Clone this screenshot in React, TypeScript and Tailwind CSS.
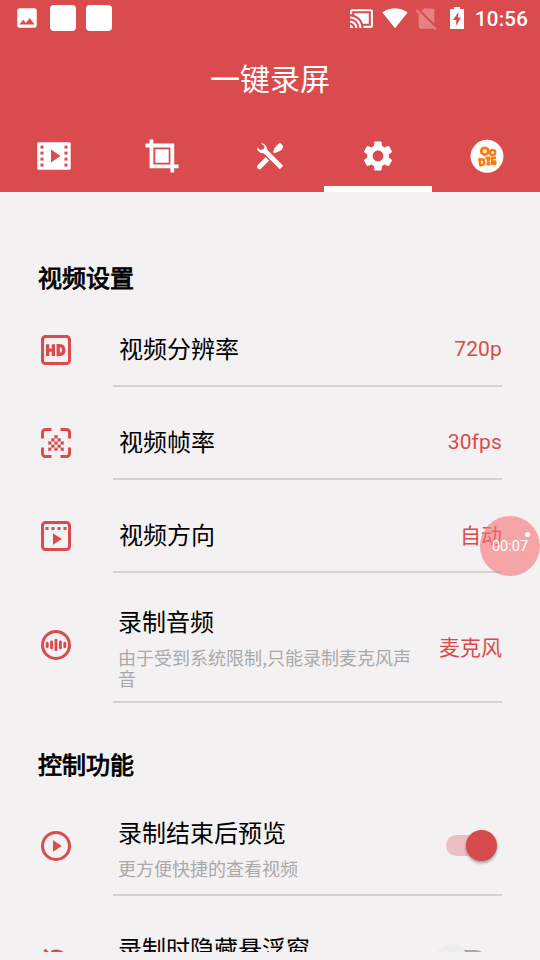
import type { ReactNode } from "react";
import { MdCastConnected, MdImage, MdSettings, MdSignalCellularNoSim, MdSignalWifi4Bar } from "react-icons/md";

const RED = "#da4b4d";

function StatusBar() {
  return (
    <div className="flex h-9 items-center pl-[14px] pr-3">
      <MdImage size={26} className="mr-[10px]" />
      <span className="mr-[10px] size-[26px] rounded-[4px] bg-white" />
      <span className="size-[26px] rounded-[4px] bg-white" />
      <MdCastConnected size={25} className="ml-auto mr-[8px] mt-px" />
      <MdSignalWifi4Bar size={26} className="mr-[5px]" />
      <MdSignalCellularNoSim size={27} className="mr-[10px] opacity-30" />
      <svg width="14" height="22" viewBox="0 0 14 22" className="mr-[11px] mb-px">
        <path d="M4 0h6v2h4v20H0V2h4z" fill="#fff" />
        <path d="M8.5 4.8 3 13h3.200v6L11 10.500H8z" fill={RED} />
      </svg>
      <span className="pt-[2px] text-[20.5px] font-medium leading-none tracking-[0.2px]">10:56</span>
    </div>
  );
}

function FilmIcon() {
  return (
    <svg width="34" height="28" viewBox="0 0 34 28">
      <rect x=".3" y=".3" width="33.400" height="27.400" rx="1.500" fill="#fff" />
      <path d="M14 7.500v13l9.500-6.500z" fill={RED} />
      {[3.6, 9.600, 15.600, 21.600].map((y) => (
        <g key={y} fill={RED}>
          <rect x="3.500" y={y} width="3" height="3" />
          <rect x="27.500" y={y} width="3" height="3" />
        </g>
      ))}
    </svg>
  );
}

function CropIcon() {
  return (
    <svg width="34" height="34" viewBox="0 0 34 34" fill="none" stroke="#fff">
      <path d="M6.500 .5v26.800H33.500M.5 6.500h26.800V33.500" strokeWidth="3.800" />
      <rect x="10.300" y="10.300" width="13.400" height="13.400" fill="#fff" stroke="none" />
    </svg>
  );
}

function ToolsIcon() {
  return (
    <svg width="28" height="28" viewBox="0 0 28 28">
      <path d="M24 .8 27.200 3.900 26.200 7.500 21.300 10.200 17.800 11.300 17.200 10.100 18.400 6.400 20.700 3.400z" fill="#fff" />
      <path d="M14 14.200 3.500 24.700" stroke="#fff" strokeWidth="4.800" strokeLinecap="round" />
      <path d="M8.500 8.500 24.500 24.500" stroke={RED} strokeWidth="7.500" />
      <path d="M8 8 25.500 25.500" stroke="#fff" strokeWidth="4.800" />
      <path d="M4.800 1.200a6 6 0 0 1 6 7.600L8.600 11A6 6 0 0 1 .9 5.200l3.400 2.900 3.300-.8.900-3.200z" fill="#fff" />
    </svg>
  );
}

function CameraLogo() {
  return (
    <svg width="34" height="34" viewBox="0 0 34 34" className="ml-px">
      <circle cx="17" cy="17.300" r="16.500" fill="#fff" />
      <g fill="none" stroke="#ff7a0f" strokeLinejoin="round">
        <ellipse cx="14.800" cy="12.200" rx="3.500" ry="3.300" strokeWidth="2.900" />
        <ellipse cx="22.600" cy="13.500" rx="2.600" ry="2.500" strokeWidth="2.500" />
        <path d="m9.300 20.300 4.700.5v4.200l-3.600 1.400z" strokeWidth="2.500" />
        <path d="M15.500 19h5M18.300 19v6.500M16.500 25.200h4" strokeWidth="2.800" />
        <path d="M26 18.800h-4v6h3.300v-2.300h-2" strokeWidth="2.500" />
      </g>
    </svg>
  );
}

const TABS = [
  { id: "videos", icon: <FilmIcon /> },
  { id: "crop", icon: <CropIcon /> },
  { id: "tools", icon: <ToolsIcon /> },
  { id: "settings", icon: <MdSettings size={36} />, active: true },
  { id: "camera", icon: <CameraLogo /> },
];

function LineIcon({ children }: { children: ReactNode }) {
  return (
    <svg width="30" height="30" viewBox="0 0 30 30" fill="none" stroke={RED} strokeWidth="3" className="shrink-0">
      {children}
    </svg>
  );
}

const hdIcon = (
  <LineIcon>
    <rect x="1.500" y="1.500" width="27" height="27" rx="3" />
    <path d="M6.600 9.200v11.800M12.400 9.200v11.800M6.600 15.100h5.800M17.200 10.700v8.800h1.500c2.800 0 4-1.500 4-4.400s-1.200-4.400-4-4.400z" strokeWidth="3.300" />
  </LineIcon>
);

const PIXELS = ["00100", "01010", "10101", "01010", "10101"];

const frameIcon = (
  <LineIcon>
    <path d="M1.500 10.500V4.500a3 3 0 0 1 3-3h6M19.500 1.500h6a3 3 0 0 1 3 3v6M28.500 19.500v6a3 3 0 0 1-3 3h-6M10.500 28.500h-6a3 3 0 0 1-3-3v-6" />
    {PIXELS.flatMap((line, r) =>
      line.split("").map((p, c) =>
        p === "1" ? (
          <rect key={`${r}-${c}`} x={7.2 + c * 3.1} y={7.2 + r * 3.1} width="3.200" height="3.200" fill={RED} stroke="none" />
        ) : null,
      ),
    )}
  </LineIcon>
);

const orientationIcon = (
  <LineIcon>
    <rect x="1.500" y="1.500" width="27" height="27" rx="3" />
    <path d="M4.500 7.500h21.500" strokeDasharray="3 3" />
    <path d="M12 12.300v11.400l8.800-5.700z" fill={RED} stroke="none" />
  </LineIcon>
);

const audioIcon = (
  <LineIcon>
    <circle cx="15" cy="15" r="13.500" />
    <path d="M6.200 13.300v3.400M10.600 12v6M15 10.300v9.400M19.400 12v6M23.800 13.300v3.400" strokeWidth="2.900" strokeLinecap="round" />
  </LineIcon>
);

const playIcon = (
  <LineIcon>
    <circle cx="15" cy="15" r="13.500" />
    <path d="M12 9.300v11.400l8.800-5.700z" fill={RED} stroke="none" />
  </LineIcon>
);

const hiddenIcon = (
  <LineIcon>
    <path d="M3.500 3.800 26 26.300M10.500 6.100a11.500 11.500 0 0 1 15.300 15M4 11a12 12 0 0 0 17 15.500" />
  </LineIcon>
);

function SimpleRow({ icon, title, value, latin }: { icon: ReactNode; title: string; value: string; latin?: boolean }) {
  return (
    <div className="flex h-[93px] pl-[41px] pr-[38px]">
      <div className="pt-[41px]">{icon}</div>
      <div className="ml-[42px] flex flex-1 justify-between border-b-2 border-[#d4d3d4] pl-[6px]">
        <span className="pt-[40px] text-2xl leading-8">{title}</span>
        <span className={`text-[21px] leading-8 text-[#da4b4d] ${latin ? "pt-[39px] tracking-[0.15px]" : "pt-[40px]"}`}>{value}</span>
      </div>
    </div>
  );
}

function Toggle({ on }: { on?: boolean }) {
  return (
    <div className={`mr-[16px] flex h-[21px] w-10 items-center rounded-full ${on ? "justify-end bg-[#edbfc1]" : "bg-[#aaa8a9]"}`}>
      <span
        className={`size-[31px] shrink-0 rounded-full shadow-[0_2px_3px_rgba(0,0,0,0.35)] ${on ? "-mr-[11px] bg-[#d6494c]" : "-ml-[9px] bg-[#ececec]"}`}
      />
    </div>
  );
}

function SectionTitle({ children }: { children: ReactNode }) {
  return <h2 className="pl-[38px] text-2xl font-normal leading-8 [-webkit-text-stroke:0.9px_black]">{children}</h2>;
}

export default function App() {
  return (
    <div className="relative flex h-[960px] w-[540px] flex-col overflow-hidden bg-[#f3f1f2] font-['Roboto','Noto_Sans_CJK_SC',sans-serif] text-black">
      <header className="flex h-48 shrink-0 flex-col bg-[#da4b4d] text-white">
        <StatusBar />
        <h1 className="flex h-[84px] items-center justify-center pt-[3px] text-[30px] font-normal leading-none">一键录屏</h1>
        <nav className="flex flex-1">
          {TABS.map((tab) => (
            <div
              key={tab.id}
              className={`flex w-[108px] items-center justify-center border-b-[6px] pt-[6px] ${tab.active ? "border-white" : "border-transparent"}`}
            >
              {tab.icon}
            </div>
          ))}
        </nav>
      </header>

      <main className="h-[760px] shrink-0 overflow-hidden pt-[71px]">
        <div className="h-[31px]">
          <SectionTitle>视频设置</SectionTitle>
        </div>
        <SimpleRow icon={hdIcon} title="视频分辨率" value="720p" latin />
        <SimpleRow icon={frameIcon} title="视频帧率" value="30fps" latin />
        <SimpleRow icon={orientationIcon} title="视频方向" value="自动" />

        <div className="flex h-[130px] pl-[41px] pr-[38px]">
          <div className="pt-[57px]">{audioIcon}</div>
          <div className="ml-[42px] flex flex-1 justify-between border-b-2 border-[#d4d3d4] pl-[5px]">
            <div className="w-[300px] pt-[34px]">
              <p className="text-2xl leading-8">录制音频</p>
              <p className="mt-2 font-['Noto_Sans_CJK_SC',sans-serif] text-lg leading-[21px] text-[#aaa9aa]">
                由于受到系统限制,只能录制麦克风声音
              </p>
            </div>
            <span className="pt-[59px] text-[21px] leading-8 text-[#da4b4d]">麦克风</span>
          </div>
        </div>

        <div className="h-[78px] pt-[47px]">
          <SectionTitle>控制功能</SectionTitle>
        </div>

        <div className="flex h-[115px] pl-[41px] pr-[38px]">
          <div className="pt-[50px]">{playIcon}</div>
          <div className="ml-[42px] flex flex-1 justify-between border-b-2 border-[#d4d3d4] pl-[5px]">
            <div className="pt-[37px]">
              <p className="text-2xl leading-8">录制结束后预览</p>
              <p className="mt-2 font-['Noto_Sans_CJK_SC',sans-serif] text-lg leading-[21px] text-[#aaa9aa]">
                更方便快捷的查看视频
              </p>
            </div>
            <div className="pt-[54px]">
              <Toggle on />
            </div>
          </div>
        </div>

        <div className="flex h-[115px] pl-[41px] pr-[38px]">
          <div className="pt-[50px]">{hiddenIcon}</div>
          <div className="ml-[42px] flex flex-1 justify-between pl-[5px]">
            <p className="pt-[38px] text-2xl leading-8">录制时隐藏悬浮窗</p>
            <div className="pt-[54px]">
              <Toggle />
            </div>
          </div>
        </div>
      </main>

      {/* Floating recording timer */}
      <div className="absolute left-[480px] top-[516px] flex size-[60px] items-center justify-center rounded-full bg-[#f67175]/60 pt-[2px] text-[14.5px] text-white">
        00:07
        <span className="absolute right-[10px] top-[16px] size-[5px] rounded-full bg-white" />
      </div>
    </div>
  );
}
